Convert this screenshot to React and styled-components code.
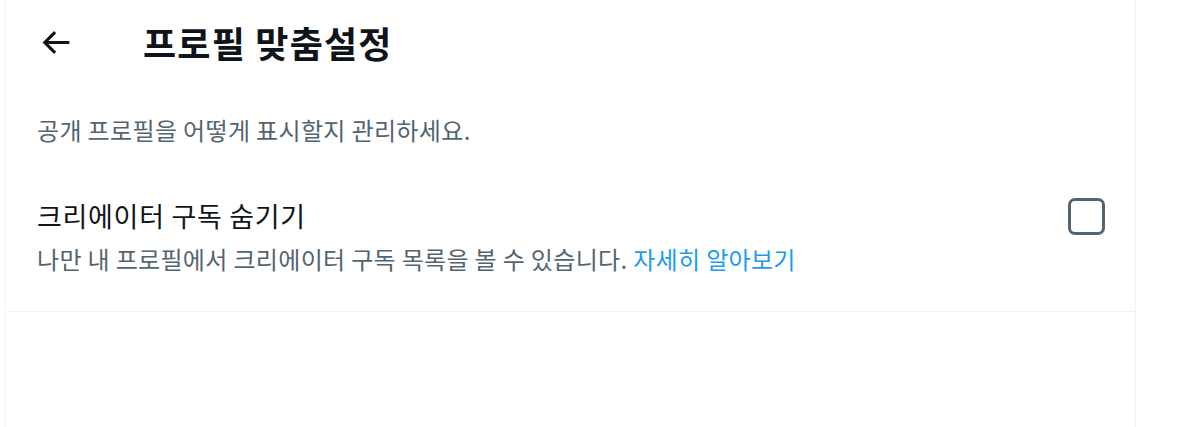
import React from 'react';
import styled, { createGlobalStyle } from 'styled-components';

const GlobalStyle = createGlobalStyle`
  html, body {
    margin: 0;
    padding: 0;
    background: #fff;
  }
  body {
    font-family: "Noto Sans CJK KR", "Noto Sans", "Liberation Sans", sans-serif;
    color: #0f1419;
  }
`;

const Page = styled.div`
  display: flex;
  min-height: 427px;
  padding-left: 5px;
`;

const Panel = styled.main`
  width: 1131px;
  box-sizing: border-box;
  border-left: 1px solid #eff3f4;
  border-right: 1px solid #eff3f4;
  min-height: 427px;
`;

const Header = styled.header`
  display: flex;
  align-items: center;
  height: 84px;
  padding-left: 31px;
`;

const BackButton = styled.button`
  width: 37px;
  height: 37px;
  padding: 0;
  border: none;
  background: transparent;
  display: flex;
  align-items: center;
  justify-content: center;
  cursor: pointer;
  margin-right: 69px;
  svg {
    width: 37px;
    height: 37px;
    fill: #0f1419;
  }
`;

const Title = styled.h2`
  margin: 0;
  font-size: 36px;
  line-height: 44px;
  font-weight: 700;
  color: #0f1419;
  letter-spacing: 1.2px;
`;

const Intro = styled.p`
  margin: 0;
  padding: 29px 31px 0;
  font-size: 24px;
  line-height: 34px;
  color: #536471;
  letter-spacing: 0.35px;
`;

const Option = styled.label`
  display: flex;
  align-items: flex-start;
  justify-content: space-between;
  padding: 51px 30px 35px 31px;
  border-bottom: 1px solid #eff3f4;
  cursor: pointer;
`;

const OptionText = styled.div`
  display: flex;
  flex-direction: column;
`;

const OptionTitle = styled.span`
  font-size: 27px;
  line-height: 36px;
  color: #0f1419;
  letter-spacing: 0.7px;
`;

const OptionDesc = styled.span`
  font-size: 24px;
  line-height: 34px;
  color: #536471;
  margin-top: 8px;
  letter-spacing: 0.33px;
`;

const Link = styled.a`
  color: #1d9bf0;
  text-decoration: none;
`;

const CheckBox = styled.span`
  width: 37px;
  height: 37px;
  box-sizing: border-box;
  border: 3px solid #536471;
  border-radius: 7px;
  flex-shrink: 0;
`;

export default function App() {
  return (
    <>
      <GlobalStyle />
      <Page>
        <Panel>
          <Header>
            <BackButton aria-label="뒤로">
              <svg viewBox="0 0 24 24">
                <path d="M7.414 13l5.043 5.04-1.414 1.42L3.586 12l7.457-7.46 1.414 1.42L7.414 11H21v2H7.414z" />
              </svg>
            </BackButton>
            <Title>프로필 맞춤설정</Title>
          </Header>
          <Intro>공개 프로필을 어떻게 표시할지 관리하세요.</Intro>
          <Option>
            <OptionText>
              <OptionTitle>크리에이터 구독 숨기기</OptionTitle>
              <OptionDesc>
                나만 내 프로필에서 크리에이터 구독 목록을 볼 수 있습니다. <Link href="#">자세히 알아보기</Link>
              </OptionDesc>
            </OptionText>
            <CheckBox />
          </Option>
        </Panel>
      </Page>
    </>
  );
}
